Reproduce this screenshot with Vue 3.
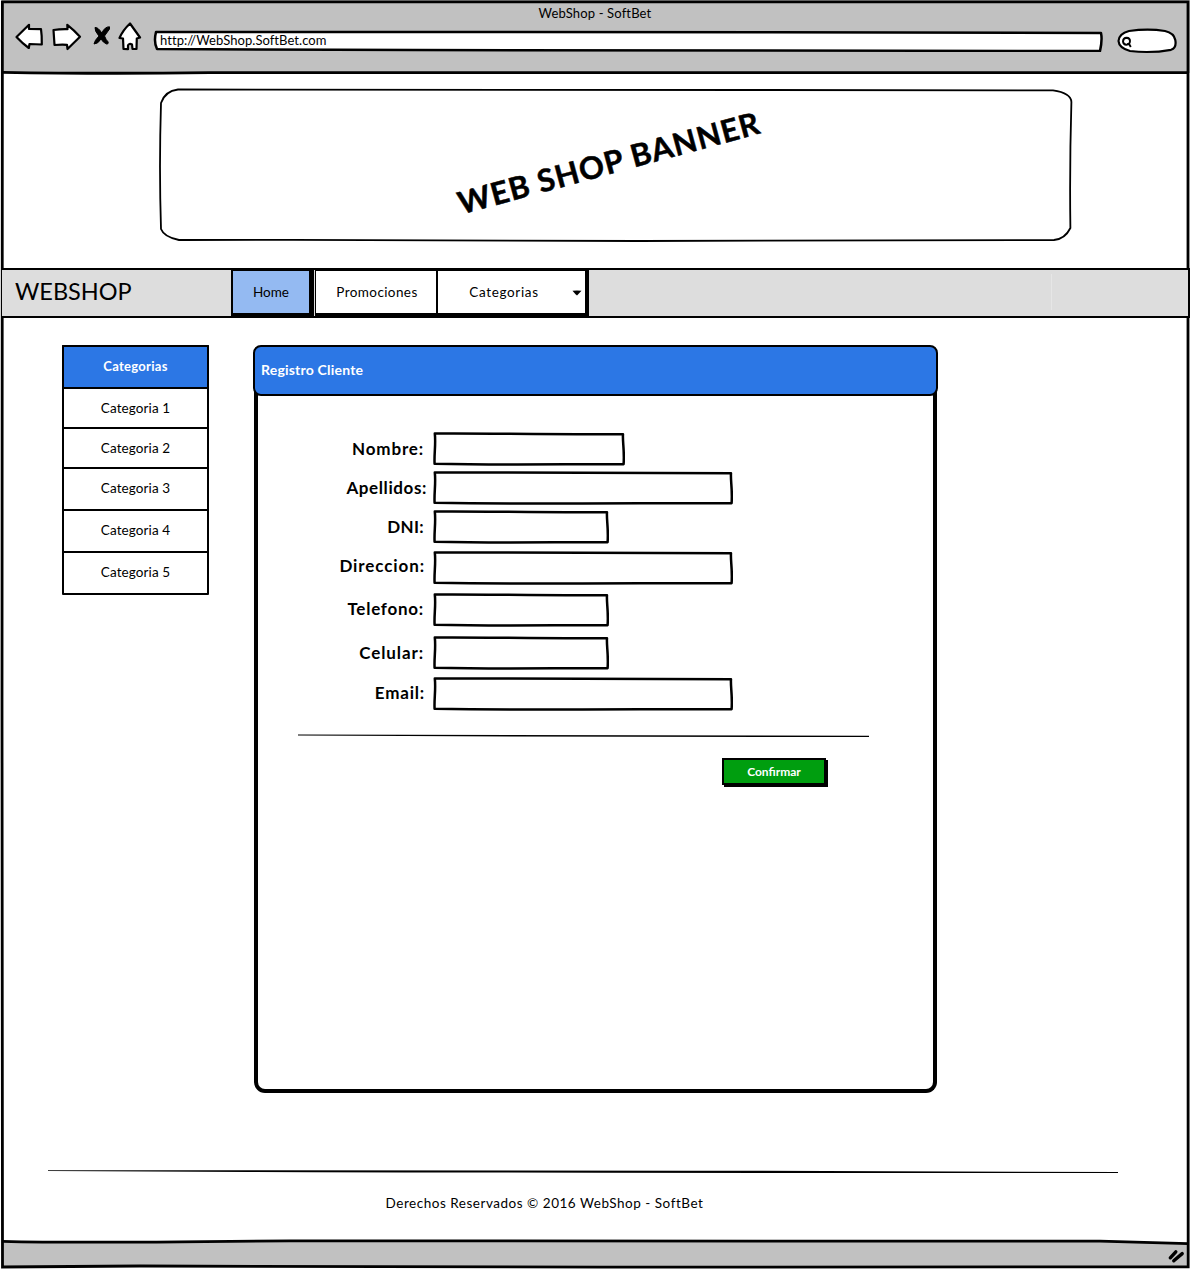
<script setup>
const categories = [
  { name: 'Categoria 1', height: 40 },
  { name: 'Categoria 2', height: 40 },
  { name: 'Categoria 3', height: 42 },
  { name: 'Categoria 4', height: 42 },
  { name: 'Categoria 5', height: 42 },
]

const fields = [
  { id: 'nombre', label: 'Nombre:', width: 192, gap: 5, inset: 9, line: 34, track: 0.85 },
  { id: 'apellidos', label: 'Apellidos:', width: 300, gap: 5, inset: 6, line: 34, track: 0.6 },
  { id: 'dni', label: 'DNI:', width: 176, gap: 7, inset: 9, line: 34, track: 0.3 },
  { id: 'direccion', label: 'Direccion:', width: 300, gap: 8, inset: 8, line: 30, track: 0.9 },
  { id: 'telefono', label: 'Telefono:', width: 176, gap: 9, inset: 9, line: 32, track: 0.75 },
  { id: 'celular', label: 'Celular:', width: 176, gap: 7, inset: 9, line: 34, track: 0.9 },
  { id: 'email', label: 'Email:', width: 300, gap: 0, inset: 8, line: 32, track: 0.8 },
]

// Slightly uneven outline for a hand-drawn text box, 33px tall.
const outline = (w) =>
  `M1.8 1.5 C${w * 0.3} 1 ${w * 0.5} 2.6 ${w - 2} 2.2 C${w - 2.6} 10 ${w - 0.4} 18 ${w - 1.4} 32.2 ` +
  `C${w * 0.7} 32 ${w * 0.4} 33.4 1.6 31.8 C1 22 3 12 1.8 1.5Z`
</script>

<template>
  <div class="window">
    <header class="chrome">
      <div class="title">WebShop - SoftBet</div>
      <div class="toolbar">
        <svg class="tools" width="136" height="32" viewBox="0 0 136 32">
          <g fill="#fff" stroke="#000" stroke-width="2.2" stroke-linejoin="round">
            <path d="M2.5 15 L15 2.8 V7 L27 7.2 Q28 14 27.8 22.5 L15.5 22 L14.8 26 Q8 21 2.5 15Z" />
            <path d="M39.5 8 Q46 7 53.5 7.2 L53.3 2.8 Q60 8 66 14.8 L53.5 27 L53 22.8 Q47 22.5 40.5 23 Q40 15 39.5 8Z" />
            <path d="M116 1.5 L126 15.5 L122.8 16.5 L122.5 27 L118.5 27 L118 22.5 Q115 21 114 23.5 L114 27.2 L109.5 27 L109 16.5 L105.5 16 Q109 8 116 1.5Z" />
          </g>
          <path d="M81 5.5 Q84 5 87.8 11 Q91 4.5 95.5 4.8 L95.5 7 L90.5 14 Q92 18 94.2 20 Q94.5 22.5 92.5 22 Q89 20.5 87 17 Q84 22 80 22 Q80.5 18.5 85 14 Q80.5 9 81 5.5Z" stroke="#000" stroke-width="1" />
        </svg>
        <div class="address">
          <svg class="sketch" width="950" height="22" viewBox="0 0 950 22">
            <path d="M3 2 Q300 1.5 620 2.2 Q800 3.2 948 3 Q949.5 10 947 21 Q500 20.5 260 20 L4 19 Q.5 12 3 2Z" />
          </svg>
          <span>http://WebShop.SoftBet.com</span>
        </div>
        <svg class="search" width="62" height="26" viewBox="0 0 62 26">
          <path d="M13 3 Q32 .3 49 3 Q58 5 59.3 12 Q60.8 20 55 21.8 Q35 25.5 14 23 Q3 20 2.5 13 Q3 5.5 13 3Z" fill="#fff" stroke="#000" stroke-width="2.2" />
          <path d="M10.6 9.8 Q14 10 14 13 Q13.8 16.6 10.4 16.8 Q7.2 16.6 7 13.4 Q7.2 10 10.6 9.8Z M11 16 L13.2 16.2 L14.8 19" fill="none" stroke="#000" stroke-width="1.9" />
        </svg>
      </div>
    </header>

    <section class="banner">
      <svg class="sketch thin" width="914" height="154" viewBox="0 0 914 154">
        <path d="M19 1.5 Q360 1 590 2 L894 2.4 Q912 5 912.4 14 Q910.5 80 911.4 140 Q906 151 895 152 L480 153 Q250 151.5 20 152 Q5 149 2 141 Q0 80 2 15 Q6 3 19 1.5Z" />
      </svg>
      <h1>WEB SHOP BANNER</h1>
    </section>

    <nav class="navbar">
      <div class="brand">WEBSHOP</div>
      <a class="tab home">Home</a>
      <a class="tab promo">Promociones</a>
      <a class="tab cats">
        <span>Categorias</span>
        <svg class="caret" width="10" height="6" viewBox="0 0 10 6"><path d="M.5 .8 Q5 0 9.5 .8 Q7 3.5 5 5.5 Q3 4 .5 .8Z" /></svg>
      </a>
      <i class="mark"></i>
    </nav>

    <main class="content">
      <aside class="sidebar">
        <div class="side-head">Categorias</div>
        <div v-for="c in categories" :key="c.name" class="side-row" :style="{ height: c.height + 'px' }">{{ c.name }}</div>
      </aside>

      <section class="panel">
        <h2>Registro Cliente</h2>
        <form class="card" @submit.prevent>
          <div v-for="f in fields" :key="f.id" class="field" :style="{ marginBottom: f.gap + 'px' }">
            <label
              :for="f.id"
              :style="{ paddingRight: f.inset + 'px', lineHeight: f.line + 'px', letterSpacing: f.track + 'px' }"
            >{{ f.label }}</label>
            <div class="box" :style="{ width: f.width + 'px' }">
              <svg class="sketch" :width="f.width" height="35"><path :d="outline(f.width)" /></svg>
              <input :id="f.id" type="text" />
            </div>
          </div>
          <svg class="rule" width="571" height="4" viewBox="0 0 571 4"><path d="M0 .6 L571 1.7 V3 Q285 3.2 0 1.6Z" /></svg>
          <button type="submit">Confirmar</button>
        </form>
      </section>
    </main>

    <footer class="footer">
      <svg width="1070" height="4" viewBox="0 0 1070 4"><path d="M0 .2 Q400 .3 700 .7 L1070 2 V3 Q500 3 200 2 L0 1Z" /></svg>
      <p>Derechos Reservados © 2016 WebShop - SoftBet</p>
    </footer>

    <svg class="frame" width="1190" height="1269" viewBox="0 0 1190 1269">
      <path class="bar" d="M2.5 1242.3 Q60 1243.5 180 1242.6 L290 1241.3 L1100 1241.5 L1188 1243.8 V1266.5 H2.5Z" />
      <g fill="none" stroke="#000" stroke-width="2.8">
        <path d="M2.5 1.8 H1188 Q1187 500 1188 900 L1188.2 1266.8 L600 1267.2 L140 1266 L2.5 1267 Q1 1000 2 700 L2.4 1.8Z" />
        <path d="M2.5 1241.3 Q60 1242.8 180 1241.8 L290 1240.8 L1100 1241.2 L1188 1243.6" />
        <path d="M2.5 72.3 Q100 74 210 72.7 H1188" />
      </g>
      <g stroke="#000" stroke-linecap="round" stroke-width="3.4">
        <path d="M1170.3 1257.8 L1175.8 1251.8 M1173.8 1260.8 L1182.2 1253.6" />
      </g>
    </svg>
  </div>
</template>

<style>
body {
  margin: 0;
  background: #fff;
}
</style>

<style scoped>
.window {
  position: relative;
  display: flex;
  flex-direction: column;
  width: 1190px;
  height: 1269px;
  overflow: hidden;
  background: #fff;
  color: #000;
  font: 13.5px/16px Lato, 'Open Sans', sans-serif;
}
.window * {
  box-sizing: border-box;
}
.frame {
  position: absolute;
  inset: 0;
  pointer-events: none;
}
.bar {
  fill: #c1c1c1;
}
.sketch {
  position: absolute;
  left: 0;
  top: 0;
}
.sketch path {
  fill: #fff;
  stroke: #000;
  stroke-width: 2.5;
  stroke-linejoin: round;
}
.sketch.thin path {
  stroke-width: 1.8;
}
.chrome {
  flex: none;
  height: 73px;
  margin-left: 2px;
  background: #c1c1c1;
  font-size: 13px;
}
.title {
  height: 21px;
  padding: 5px 2px 0 0;
  text-align: center;
  letter-spacing: 0.15px;
}
.toolbar {
  display: flex;
  align-items: flex-start;
  padding-left: 12px;
}
.tools {
  margin-top: 1px;
}
.address {
  position: relative;
  width: 950px;
  height: 22px;
  margin: 9px 0 0 3px;
  padding: 2px 7px;
  letter-spacing: 0.06px;
}
.address span {
  position: relative;
}
.search {
  margin: 7px 0 0 13px;
}
.banner {
  position: relative;
  flex: none;
  width: 914px;
  height: 154px;
  margin: 15px 0 0 159px;
  display: flex;
  align-items: center;
  justify-content: center;
}
h1 {
  position: relative;
  margin: -6px 14px 0 0;
  font-size: 31px;
  line-height: 40px;
  font-weight: 700;
  letter-spacing: 0.95px;
  white-space: nowrap;
  -webkit-text-stroke: 0.5px #000;
  transform: rotate(-15.2deg);
}
.navbar {
  position: relative;
  z-index: 1;
  flex: none;
  display: flex;
  height: 50px;
  margin: 26px 0 0 2px;
  border: 2px solid #000;
  border-left: 0;
  background: #ddd;
}
.brand {
  width: 229px;
  padding: 8px 0 0 13px;
  font-size: 23.5px;
  line-height: 26px;
}
.tab {
  display: flex;
  align-items: center;
  justify-content: center;
  height: 46px;
  padding-bottom: 1px;
  border: 1px solid #000;
  border-bottom-width: 3px;
  background: #fff;
}
.home {
  width: 83px;
  border-left-width: 2px;
  border-right: 5px solid #000;
  background: #94baf2;
}
.promo {
  width: 122px;
  margin-left: 1px;
  padding-left: 2px;
  letter-spacing: 0.4px;
}
.cats {
  position: relative;
  width: 152px;
  padding-right: 15px;
  border-right: 4px solid #000;
  letter-spacing: 0.65px;
}
.caret {
  position: absolute;
  right: 3px;
  top: 19px;
}
.mark {
  width: 1px;
  height: 36px;
  margin: 4px 0 0 462px;
  background: #e6e6e6;
}
.content {
  display: flex;
  align-items: flex-start;
  flex: none;
  height: 852px;
  padding: 27px 0 0 62px;
}
.sidebar {
  width: 147px;
  border: 2px solid #000;
  border-bottom: 0;
  border-radius: 1px;
}
.side-head,
.side-row {
  display: flex;
  align-items: center;
  justify-content: center;
  border-bottom: 2px solid #000;
}
.side-head {
  height: 42px;
  padding-bottom: 2px;
  background: #2c77e5;
  color: #fff;
  font-size: 13px;
  font-weight: 700;
  letter-spacing: 0.3px;
}
.side-row {
  letter-spacing: 0.1px;
}
.side-row:nth-child(n + 4) {
  padding-bottom: 2px;
}
.panel {
  width: 685px;
  margin-left: 44px;
}
h2 {
  position: relative;
  height: 51px;
  margin: 0;
  padding: 13px 6px;
  border: 2px solid #000;
  border-radius: 8px;
  background: #2c77e5;
  color: #fff;
  font-size: 14px;
  line-height: 19px;
  letter-spacing: 0.2px;
}
.card {
  width: 683px;
  height: 702px;
  margin: -5px 0 0 1px;
  padding-top: 41px;
  border: 4px solid #000;
  border-top: 0;
  border-radius: 0 0 11px 11px;
}
.field {
  display: flex;
  height: 34px;
}
.field label {
  flex: none;
  width: 175px;
  font-size: 17px;
  font-weight: 700;
  text-align: right;
  white-space: nowrap;
}
.box {
  position: relative;
}
.box input {
  position: relative;
  width: 100%;
  height: 34px;
  padding: 0 6px;
  border: 0;
  outline: 0;
  background: transparent;
}
.rule {
  display: block;
  margin: 23px 0 0 40px;
}
button {
  display: block;
  width: 104px;
  height: 27px;
  margin: 20px 0 0 464px;
  padding: 0;
  border: 2px solid #000;
  background: #009e0f;
  box-shadow: 2px 2px 0 #000;
  color: #fff;
  font: 700 12px/22px Lato, 'Open Sans', sans-serif;
}
.footer {
  width: 1070px;
  margin-left: 48px;
}
.footer svg {
  display: block;
}
.footer p {
  width: 993px;
  margin: 21px 0 0;
  text-align: center;
  letter-spacing: 0.52px;
}
</style>
